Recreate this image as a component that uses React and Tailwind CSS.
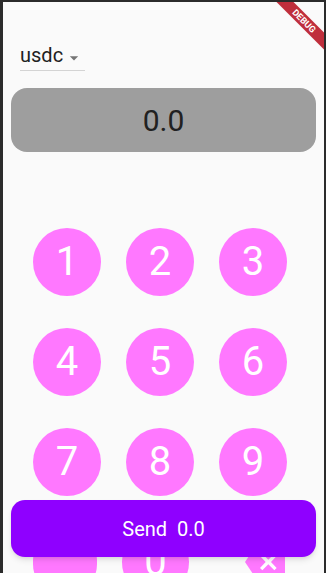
import React from "react";

const rows = [
  ["1", "2", "3"],
  ["4", "5", "6"],
  ["7", "8", "9"],
];

const KeyButton = ({ label }) => (
  <div className="w-[68px] h-[68px] rounded-full bg-[#ff78ff] flex items-center justify-center text-white text-[40px] leading-none">
    {label}
  </div>
);

const BackspaceIcon = () => (
  <svg viewBox="0 0 24 24" className="w-[40px] h-[40px]" fill="#ff78ff">
    <path d="M22 3H7c-.69 0-1.23.35-1.59.88L0 12l5.41 8.11c.36.53.9.89 1.59.89h15c1.1 0 2-.9 2-2V5c0-1.1-.9-2-2-2z" />
    <path
      d="M19 15.59L17.59 17 14 13.41 10.41 17 9 15.59 12.41 12 9 8.41 10.41 7 14 10.59 17.59 7 19 8.41 15.59 12z"
      fill="#ffffff"
    />
  </svg>
);

export default function App() {
  return (
    <div
      className="relative w-[326px] h-[573px] overflow-hidden bg-[#fafafa] border-l-[3px] border-t-2 border-r-2 border-[#2b2b2b]"
      style={{ fontFamily: "Roboto, 'Noto Sans', sans-serif" }}
    >
      {/* token dropdown */}
      <div className="ml-[17px] mt-[41px] w-[65px] h-[28px] flex items-start border-b border-[#d4d4d4]">
        <span className="text-[20px] leading-[24px] text-[#212121]">usdc</span>
        <svg viewBox="0 0 24 24" className="w-[20px] h-[20px] relative top-[5px] ml-px" fill="#757575">
          <path d="M7 10l5 5 5-5z" />
        </svg>
      </div>

      {/* amount display */}
      <div className="mx-2 mt-[17px] h-[64px] rounded-[16px] bg-[#9e9e9e] flex items-center justify-center">
        <span className="text-[30px] text-[#212121]">0.0</span>
      </div>

      {/* keypad */}
      <div className="mt-[76px] ml-[30px] flex flex-col gap-[32px]">
        {rows.map((row, i) => (
          <div key={i} className="flex gap-[25px]">
            {row.map((n) => (
              <KeyButton key={n} label={n} />
            ))}
          </div>
        ))}
        <div className="flex items-center">
          <div className="w-[64px] h-[68px] rounded-full bg-[#ff78ff]" />
          <div className="ml-[25px] w-[67px] h-[68px] rounded-full bg-[#ff78ff] flex items-center justify-center text-white text-[40px] leading-none">
            0
          </div>
          <div className="ml-[56px]">
            <BackspaceIcon />
          </div>
        </div>
      </div>

      {/* send button */}
      <button className="absolute left-2 right-2 bottom-4 h-[57px] rounded-[14px] bg-[#8f00ff] text-white text-[20px] shadow-md flex items-center justify-center">
        Send&nbsp;&nbsp;0.0
      </button>

      {/* debug banner */}
      <div className="absolute left-[251px] top-[13px] w-[100px] h-[12px] rotate-45 bg-[#bf2e3c] flex items-center justify-center">
        <span className="text-white text-[9px] font-bold leading-none">DEBUG</span>
      </div>
    </div>
  );
}
